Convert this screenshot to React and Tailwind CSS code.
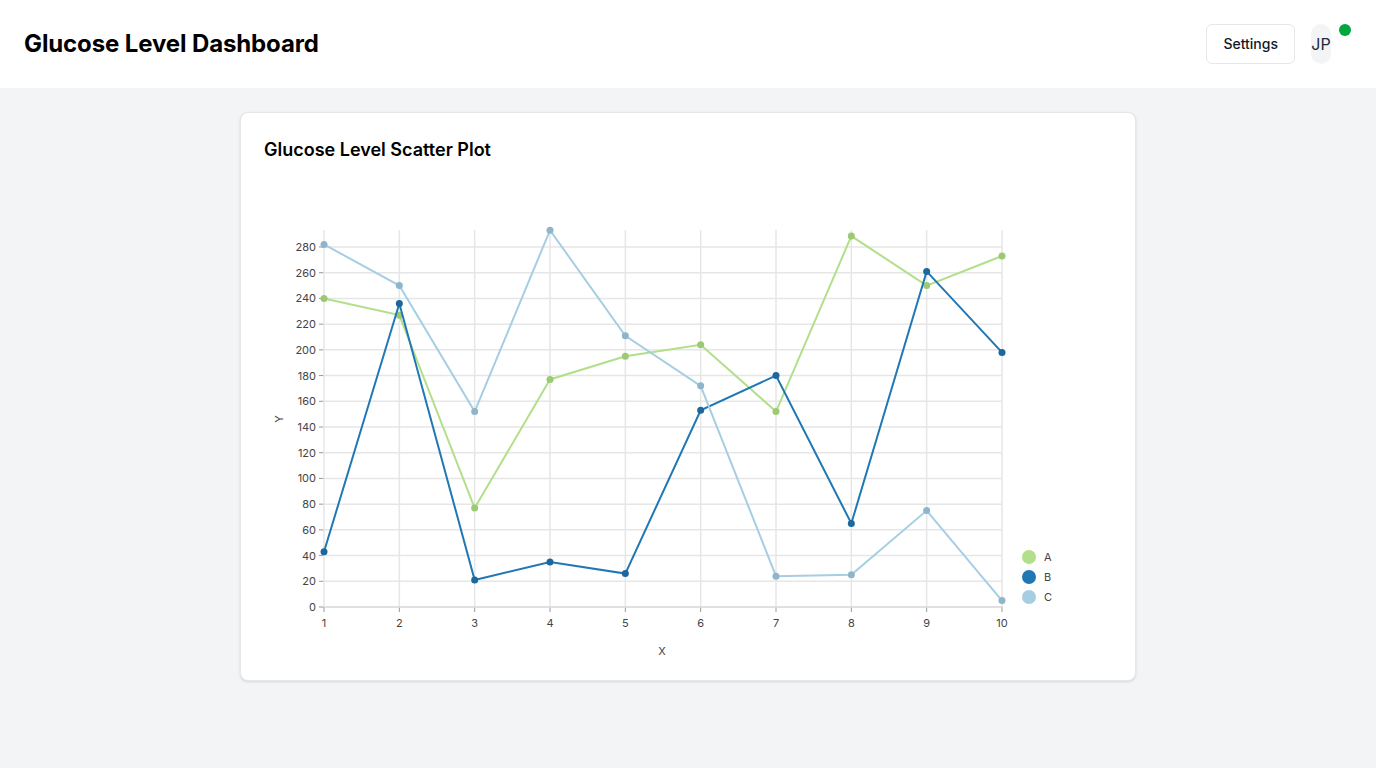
import React from "react";

const series = [
  { name: "A", line: "#b2df8a", dot: "#9bc974", values: [240, 227, 77, 177, 195, 204, 152, 288.5, 250, 273] },
  { name: "B", line: "#1f78b4", dot: "#1c679c", values: [43, 236, 21, 35, 26, 153, 180, 65, 261, 198] },
  { name: "C", line: "#a6cee3", dot: "#8fb5cb", values: [282, 250, 152, 293, 211, 172, 24, 25, 75, 5] },
];

const X0 = 60;
const STEP = 678 / 9;
const Y0 = 423;
const PER = 360 / 280;
const sx = (i) => X0 + i * STEP;
const sy = (v) => Y0 - v * PER;

function Chart() {
  const yTicks = Array.from({ length: 15 }, (_, i) => i * 20);
  const xTicks = Array.from({ length: 10 }, (_, i) => i);
  return (
    <svg
      width="848"
      height="473"
      className="block overflow-visible"
      style={{ fontFamily: "Inter, 'Liberation Sans', sans-serif" }}
    >
      {yTicks.map((t) => (
        <g key={t}>
          <line x1={X0} x2={738} y1={sy(t)} y2={sy(t)} stroke="#e6e6e6" strokeWidth="1.5" />
          <line x1={X0 - 5} x2={X0} y1={sy(t)} y2={sy(t)} stroke="#999" />
          <text x={X0 - 8} y={sy(t) + 4} textAnchor="end" fontSize="11" fill="#444">{t}</text>
        </g>
      ))}
      {xTicks.map((i) => (
        <g key={i}>
          <line x1={sx(i)} x2={sx(i)} y1={46} y2={Y0} stroke="#e6e6e6" strokeWidth="1.5" />
          <line x1={sx(i)} x2={sx(i)} y1={Y0} y2={Y0 + 5} stroke="#999" />
          <text x={sx(i)} y={Y0 + 20} textAnchor="middle" fontSize="11" fill="#444">{i + 1}</text>
        </g>
      ))}
      <line x1={X0} x2={738} y1={Y0} y2={Y0} stroke="#ddd" strokeWidth="1.5" />
      <text x={398} y={471} textAnchor="middle" fontSize="11" fill="#444">X</text>
      <text x={19} y={235} textAnchor="middle" fontSize="11" fill="#444" transform="rotate(-90 19 235)">Y</text>
      {series.map((s) => (
        <g key={s.name}>
          <polyline
            points={s.values.map((v, i) => `${sx(i)},${sy(v)}`).join(" ")}
            fill="none"
            stroke={s.line}
            strokeWidth="2"
          />
          {s.values.map((v, i) => (
            <circle key={i} cx={sx(i)} cy={sy(v)} r="3.5" fill={s.dot} />
          ))}
        </g>
      ))}
      {series.map((s, i) => (
        <g key={s.name}>
          <circle cx={765} cy={373 + i * 20} r="7" fill={s.line} />
          <text x={780} y={377 + i * 20} fontSize="11" fill="#444">{s.name}</text>
        </g>
      ))}
    </svg>
  );
}

export default function App() {
  return (
    <div className="min-h-screen bg-gray-100 font-['Inter','Liberation_Sans',sans-serif]">
      <header className="h-[88px] bg-white flex items-center justify-between pl-6 pr-[45px]">
        <h1 className="text-2xl font-bold tracking-[-0.005em] text-black">Glucose Level Dashboard</h1>
        <div className="flex items-center gap-4">
          <button className="h-10 px-4 rounded-md border border-gray-200 bg-white text-sm font-medium text-gray-900">
            Settings
          </button>
          <div className="relative">
            <div className="h-10 w-5 rounded-full bg-gray-100 flex items-center justify-center text-base text-gray-800">
              JP
            </div>
            <span className="absolute left-[28px] top-0 w-3 h-3 rounded-full bg-green-600" />
          </div>
        </div>
      </header>
      <main className="flex justify-center pt-6">
        <div className="w-[896px] bg-white rounded-lg shadow-sm border border-gray-200 p-[23px]">
          <h2 className="text-lg font-semibold text-black">Glucose Level Scatter Plot</h2>
          <div className="mt-5">
            <Chart />
          </div>
        </div>
      </main>
    </div>
  );
}
